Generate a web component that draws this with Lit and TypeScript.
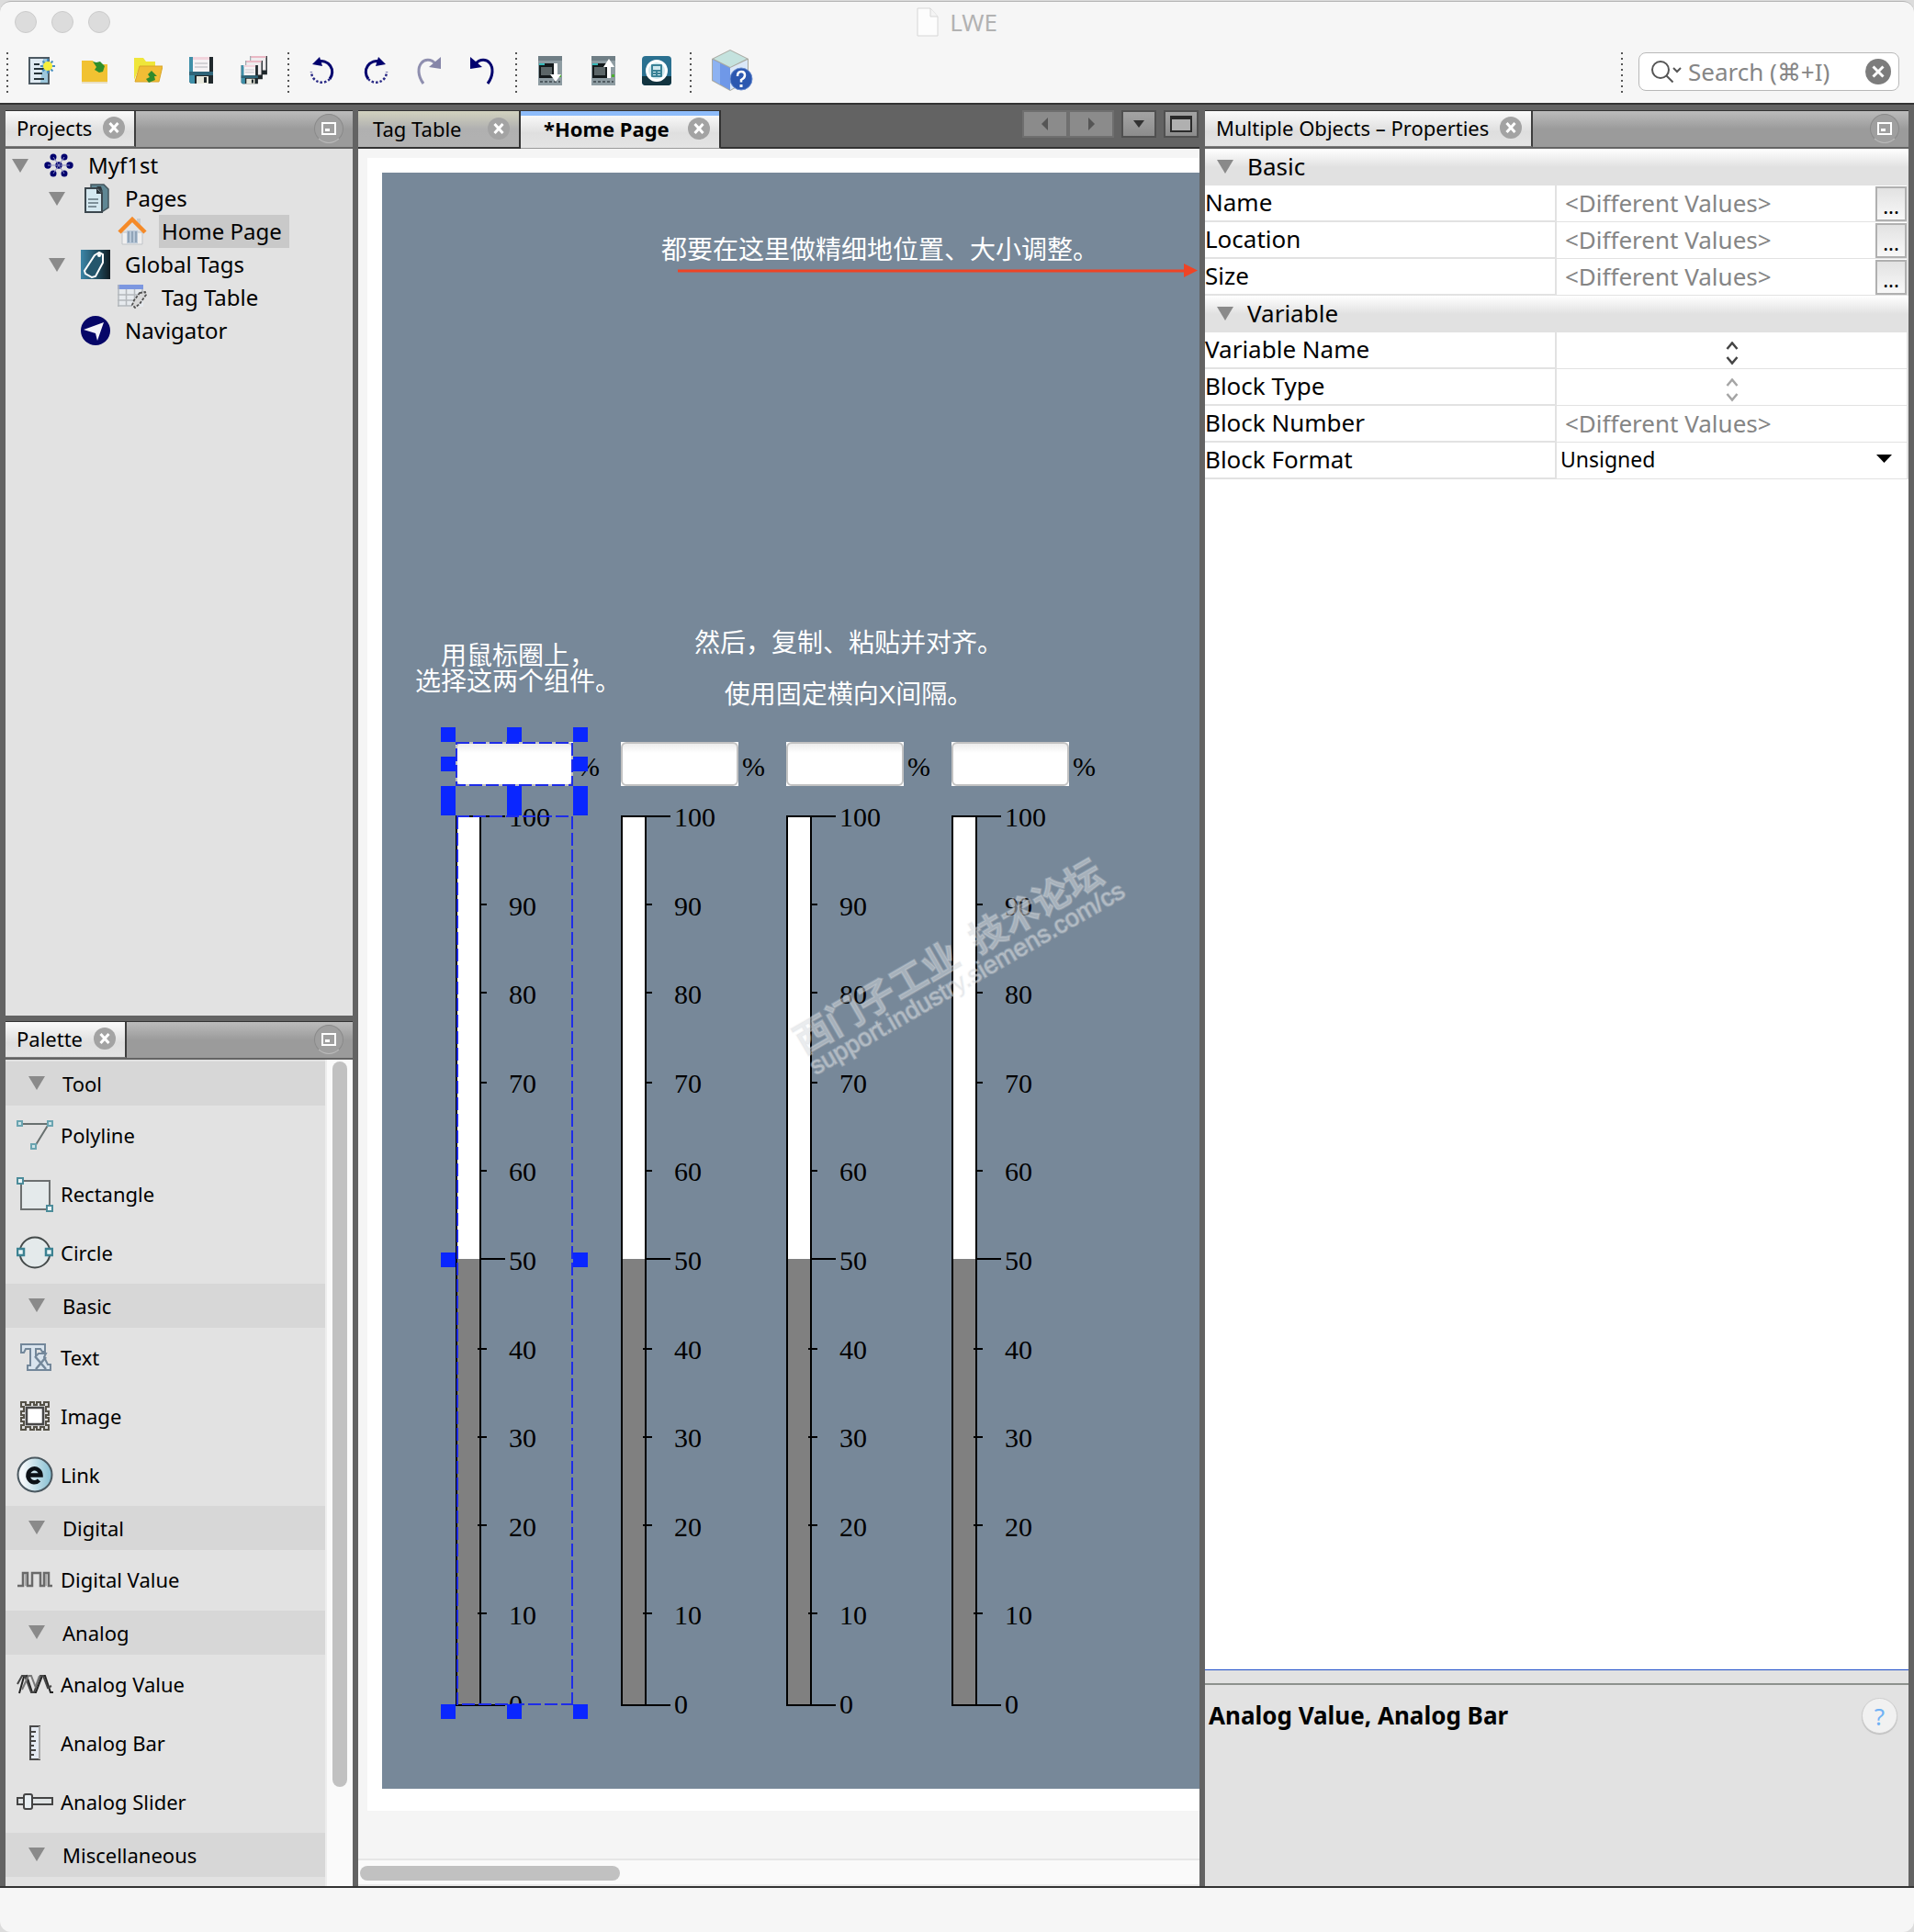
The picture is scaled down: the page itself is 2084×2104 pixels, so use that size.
import { LitElement, html, svg, css, nothing, TemplateResult } from "lit";
import { customElement, property } from "lit/decorators.js";
import { classMap } from "lit/directives/class-map.js";

const icon = (size: number, body: unknown, box = "0 0 32 32") =>
  html`<svg class="ico" width=${size} height=${size} viewBox=${box} aria-hidden="true">${body}</svg>`;

const closeIcon = icon(24, svg`<circle cx="12" cy="12" r="12" fill="#a3a3a3"/><path d="M7.500 7l9 10M16.500 7l-9 10" stroke="#fff" stroke-width="3"/>`, "0 0 24 24");

const floppy = svg`<path d="M1 0h26v29H3l-2-2z" fill="#20282c"/><path d="M1 0h6v29H3l-2-2z" fill="#3f8fa8"/><path d="M5 0h18v16H5z" fill="#f6f2f4"/><path d="M5 0h18v3H5z" fill="#f2d4dc"/><path d="M7 7h14M7 11h14" stroke="#c8c8cc" stroke-width="1.500"/><path d="M1 16h26v4H1z" fill="#2f6478"/><path d="M9 21h13v8H9z" fill="#e8e8dc"/><path d="M17 22h3v6h-3z" fill="#20282c"/>`;

const backFloppy = svg`<path d="M1 0h26v29H1z" fill="#20282c"/><path d="M1 0h24v22H1z" fill="#efecee"/><path d="M1 0h24v3H1z" fill="#eab8c4"/><path d="M1 0v22" stroke="#9aa6ac" stroke-width="1.500"/>`;

const plc = (up: boolean) => svg`<path d="M3 0h26v32H3z" fill="#8e9ca2"/><path d="M3 0h26v5H3z" fill="#6f7e85"/><path d="M4 8h17v16H4z" fill="#141a1c"/><path d="M4 8h6v2H4z" fill="#35b8b8"/><path d="M6 12h12v9H6z" fill="#5c6668"/><path d="M5 28h22" stroke="#4f5a60" stroke-width="2" stroke-dasharray="3 2"/><path d="M25 20h3v3h-3z" fill="#4caf30"/>${
  up ? svg`<path d="M20 24V12h-4l6-9 6 9h-4v12z" fill="#fff"/>` : svg`<path d="M20 8v12h-4l6 8 6-8h-4V8z" fill="#fff"/>`}`;

const ICONS: Record<string, TemplateResult> = {
  newFile: icon(32, svg`<path d="M3 2h21v28H3z" fill="#dfeaf2" stroke="#4d5a63" stroke-width="2"/><path d="M18 3h5v26h-8z" fill="#9cc7dc"/><path d="M8 9h6M8 14h11M8 19h9M8 25h11" stroke="#263238" stroke-width="2"/><path d="M23 3v16M15 11h16M17.500 5.500l11 11M28.500 5.500l-11 11" stroke="#4a90c0" stroke-width="2"/><circle cx="23" cy="11" r="5" fill="#f6ee3c"/>`),
  importFolder: icon(32, svg`<path d="M2 5h12l3 4h13v20H2z" fill="#f1c232"/><path d="M2 28h28v2H2z" fill="#e9dfc4"/><path d="M14 6l4 1 4-1 5 5-2 6-4 1-5-3 2-3z" fill="#2f8f2a"/>`),
  openFolder: icon(32, svg`<path d="M1 2h10l3 4h10v6H7L1 26z" fill="#efe63a"/><path d="M7 11h25l-4 17H2z" fill="#f1bd35" stroke="#d8a428"/><path d="M20 16l6 6h-3l1 4-7 3-3-4 4-2-2-3z" fill="#2f8a2c"/>`),
  save: icon(30, floppy, "0 0 28 30"),
  saveAll: icon(32, svg`<g transform="translate(11 0) scale(.7)">${backFloppy}</g><g transform="translate(6 5) scale(.7)">${backFloppy}</g><g transform="translate(1 10) scale(.7)">${floppy}</g>`),
  undoAll: icon(32, svg`<path d="M11 6a12 12 0 0 1 13 19" fill="none" stroke="#00006e" stroke-width="3"/><path d="M24 25A11.500 11.500 0 0 1 4 17" fill="none" stroke="#2b2b86" stroke-width="2.500" stroke-dasharray="2.500 2"/><path d="M5 9l8-8 3 10z" fill="#00006e"/>`),
  redoAll: icon(32, svg`<path d="M21 6A12 12 0 0 0 8 25" fill="none" stroke="#00006e" stroke-width="3"/><path d="M8 25a11.500 11.500 0 0 0 20-8" fill="none" stroke="#2b2b86" stroke-width="2.500" stroke-dasharray="2.500 2"/><path d="M27 9l-8-8-3 10z" fill="#00006e"/>`),
  redo: icon(32, svg`<path d="M10 30C-3 12 12-4 24 9" fill="none" stroke="#8f8faf" stroke-width="3"/><path d="M29 1v13l-13-2z" fill="#8585a8"/>`),
  undo: icon(32, svg`<path d="M22 30C35 12 20-4 8 9" fill="none" stroke="#00006e" stroke-width="3"/><path d="M3 1v13l13-2z" fill="#00006e"/>`),
  download: icon(32, plc(false)),
  upload: icon(32, plc(true)),
  simulate: icon(32, svg`<rect width="32" height="32" rx="4" fill="#2a7090"/><path d="M0 22h32v6a4 4 0 0 1-4 4H4a4 4 0 0 1-4-4z" fill="#123440"/><circle cx="16" cy="16" r="10.500" fill="#cfe8ee" stroke="#fff" stroke-width="3"/><rect x="10" y="9" width="12" height="14" rx="1" fill="#3a8296"/><path d="M12 11h8v4h-8zM12 17h3v1h-3zM17 17h3v1h-3zM12 20h3v1h-3zM17 20h3v1h-3z" fill="#cfe8ee"/>`),
  help: icon(48, svg`<path d="M23 1l20 10v24L23 46 3 35V11z" fill="#a9a9a0"/><path d="M23 2l18 9-18 9-18-9z" fill="#c4e2de"/><path d="M4 12l19 9v24L4 34z" fill="#6f98e8"/><path d="M4 12l8 4v23l-8-5z" fill="#8db2f2"/><path d="M42 12l-19 9v24l19-11z" fill="#dbe8f8"/><circle cx="35" cy="33" r="12" fill="#2c58b0" stroke="#6d8fd0"/><path d="M31 30q0-5 4-5t4 4q0 3-4 5v2.500" fill="none" stroke="#fff" stroke-width="2.500"/><path d="M33.500 39h3v3h-3z" fill="#fff"/>`, "0 0 48 48"),
  project: icon(32, svg`<g fill="#00006e"><circle cx="10" cy="7" r="3.500"/><circle cx="22" cy="7" r="3.500"/><circle cx="4" cy="16" r="3.700"/><circle cx="16" cy="16" r="3.700"/><circle cx="28" cy="16" r="3.700"/><circle cx="10" cy="25" r="3.500"/><circle cx="22" cy="25" r="3.500"/></g><path d="M4 16h24M10 7l12 18M22 7L10 25" stroke="#8a8ac0" stroke-width="1"/>`),
  pages: icon(32, svg`<path d="M11 1h14l5 5v20l-6 4H11z" fill="#5f8794" stroke="#42545c" stroke-width="1.500"/><path d="M5 5h14l4 5v21H5z" fill="#d4e8f0" stroke="#3c474e" stroke-width="2"/><path d="M17 5l6 6h-6zM17 3l7 6-2-6z" fill="#2d363b"/><path d="M8 17h11M8 21h11M8 25h9" stroke="#7d9099" stroke-width="1.800"/>`),
  home: icon(32, svg`<path d="M5 17h22v13H5z" fill="#f0f0f0" stroke="#c0c4c8"/><path d="M10 15h12v14H10z" fill="#b9c8d8"/><path d="M12 16v12M16 16v12M20 16v12" stroke="#8499ae" stroke-width="1.500"/><path d="M21 2h4v7l-4-4z" fill="#c8ccd0"/><path d="M2 17L16 3l14 14" fill="none" stroke="#f58a28" stroke-width="4.500"/>`),
  tags: icon(32, svg`<defs><linearGradient id="tg"><stop offset="0" stop-color="#3c86a8"/><stop offset=".6" stop-color="#1f4a5c"/><stop offset="1" stop-color="#101c22"/></linearGradient></defs><path d="M0 0h32v32H0z" fill="url(#tg)"/><path d="M15 6l5-3 4 2v9l-8 15-4 1-7-4-1-3z" fill="#24566c" stroke="#fff" stroke-width="2"/><circle cx="20" cy="6" r="2" fill="#fff"/>`),
  table: icon(32, svg`<path d="M0 2h28v24H0z" fill="#e6eaee"/><path d="M0 2h28v5H0z" fill="#7c97e0"/><path d="M1 2v24M9.500 7v18M18.500 7v12M27 7v6M0 13h27M0 19h20M0 25h16" stroke="#b4b8bc" stroke-width="1.500"/><path d="M24 11l6-1 1 3-7 10-5 4-3-3 2-5z" fill="#d8d8d8" stroke="#505050" stroke-width="1.800" stroke-dasharray="3 1.500"/>`),
  navigator: icon(32, svg`<circle cx="16" cy="16" r="16" fill="#060668"/><path d="M3 15l22-8-7 20-2-8z" fill="#f4f4fa"/>`),
  polyline: icon(40, svg`<path d="M4 8h31L19 34" fill="none" stroke="#68706f" stroke-width="2"/><g fill="#cfe4e8" stroke="#6aa4b0" stroke-width="2"><path d="M1 5h5v5H1zM34 5h5v5h-5zM16 30h5v5h-5z"/></g>`, "0 0 40 40"),
  rectangle: icon(40, svg`<path d="M5 6h31v31H5z" fill="#e4eaeb" stroke="#6c7070" stroke-width="2"/><g fill="#e8f4f6" stroke="#4c8c9a" stroke-width="2"><path d="M1 3h6v6H1zM33 33h6v6h-6z"/></g>`, "0 0 40 40"),
  circle: icon(40, svg`<circle cx="20" cy="20" r="16.500" fill="#e4eaeb" stroke="#444a4a" stroke-width="2"/><g fill="#e8f4f6" stroke="#3c8292" stroke-width="2.500"><path d="M1 16h7v7H1zM32 16h7v7h-7z"/></g>`, "0 0 40 40"),
  text: icon(40, svg`<path d="M5 6h26v8h-3l-2-3h-5v8l3-3h8l-2 4 4 8h3v6h-25v-5h3V11h-5l-2 4H5z" fill="#d9e4ee" stroke="#73879a" stroke-width="2"/><path d="M20 19l12 14M32 20L21 33" stroke="#73879a" stroke-width="2.500"/>`, "0 0 40 40"),
  image: icon(40, svg`<path d="M6 6h28v28H6z" fill="#ddd"/><path d="M5 10V5h5v3h5V5h4v3h3V5h4v3h4V5h5v5h-3v5h3v4h-3v3h3v4h-3v4h3v5h-5v-3h-4v3h-4v-3h-3v3h-4v-3h-5v3H5v-5h3v-4H5v-4h3v-3H5v-4h3v-5z" fill="#ddd" stroke="#555248" stroke-width="2"/><path d="M11 11h18v18H11z" fill="#fff" stroke="#484848" stroke-width="2.500"/>`, "0 0 40 40"),
  link: icon(40, svg`<defs><linearGradient id="lk"><stop offset=".15" stop-color="#f4f8fa"/><stop offset="1" stop-color="#85bfd2"/></linearGradient></defs><circle cx="20" cy="20" r="18.500" fill="url(#lk)" stroke="#4a5860" stroke-width="2"/><path d="M13.500 20.500h13a7 7.500 0 1 0-2 5.500" fill="none" stroke="#0c1116" stroke-width="4.500"/>`, "0 0 40 40"),
  digital: icon(40, svg`<path d="M1 27h6V13h5v14h5V13h9v14h4V13h5v14h4" fill="none" stroke="#6a6a6a" stroke-width="2.500"/><path d="M10 14v13M32 14v13" stroke="#9a9a9a" stroke-width="1.500"/>`, "0 0 40 40"),
  analog: icon(40, svg`<g fill="none" stroke-width="2"><path d="M3 30L8 12l3-1 6 18h4l7-18h3l6 18h3" stroke="#222"/><path d="M1 20l5-9h3l7 18h3l7-18h3l5 13 4-2" stroke="#444"/><path d="M6 26l7-15h3l5 13" stroke="#777"/><path d="M21 22l4-11" stroke="#777"/></g>`, "0 0 40 40"),
  bar: icon(40, svg`<path d="M15 2h10v36H15z" fill="#e4eaf2" stroke="#4a4a4a" stroke-width="2"/><path d="M24 2h2v36h-2z" fill="#a9a9a9"/><path d="M16 8h5M16 13h3M16 18h5M16 23h3M16 28h5M16 33h3" stroke="#444" stroke-width="2"/>`, "0 0 40 40"),
  slider: icon(40, svg`<path d="M1 16h38v7H1z" fill="#dfe3e4" stroke="#444" stroke-width="2"/><rect x="8" y="12" width="9" height="16" rx="2" fill="#e8eef2" stroke="#444" stroke-width="2"/>`, "0 0 40 40"),
};

const triangle = html`<svg class="tri" width="18" height="15" viewBox="0 0 18 15" aria-hidden="true"><path d="M0 0h18L9 15z" fill="#8a8a8a"/></svg>`;

const shared = css`
  :host, * { box-sizing: border-box; }
  button, input, select { font: inherit; color: inherit; margin: 0; padding: 0; border: 0; background: none; border-radius: 0; }
  svg { display: block; flex: none; }
  ul { list-style: none; margin: 0; padding: 0; }
`;

/** Title strip of a docked panel: one tab and a minimise button. */
@customElement("dock-header")
export class DockHeader extends LitElement {
  static styles = [shared, css`
    :host { display: flex; flex: none; height: 42px; border-top: 1px solid #333; border-bottom: 2px solid #646464;
      background: linear-gradient(#bcbcbc, #9b9b9b 50%, #9b9b9b); justify-content: space-between; align-items: flex-start; padding-right: 10px; }
    .tab { display: flex; align-items: center; gap: 12px; height: 39px; padding: 0 10px 2px 12px; font-size: 22px; line-height: 30px;
      background: linear-gradient(#fafafa, #dedede 60%, #e4e4e4); border-right: 2px solid #3d3d3d; border-bottom: 1px solid #7d7d7d; white-space: nowrap; }
    .min { display: grid; place-items: center; width: 32px; height: 32px; margin-top: 3px; border-radius: 50%; border: 1px solid #8a8a8a; border-bottom-color: #bbb; background: #9f9f9f; }
  `];
  @property() label = "";
  render() {
    return html`
      <div class="tab"><span>${this.label}</span><button aria-label="Close ${this.label}">${closeIcon}</button></div>
      <button class="min" aria-label="Minimize ${this.label}">${icon(18, svg`<path d="M2 3h14v12H2z" fill="none" stroke="#fff" stroke-width="2"/><path d="M5 9h5v3H5z" fill="#fff"/>`, "0 0 18 18")}</button>`;
  }
}

interface Node { label: string; icon: string; level: number; open?: boolean; selected?: boolean; }
const TREE: Node[] = [
  { label: "Myf1st", icon: "project", level: 0, open: true },
  { label: "Pages", icon: "pages", level: 1, open: true },
  { label: "Home Page", icon: "home", level: 2, selected: true },
  { label: "Global Tags", icon: "tags", level: 1, open: true },
  { label: "Tag Table", icon: "table", level: 2 },
  { label: "Navigator", icon: "navigator", level: 1 },
];

@customElement("project-tree")
export class ProjectTree extends LitElement {
  static styles = [shared, css`
    :host { display: block; flex: 1; background: #e2e2e2; font-size: 24px; line-height: 36px; }
    .row { display: flex; align-items: center; height: 36px; padding-left: 7px; }
    .l1 { padding-left: 47px; }
    .l2 { padding-left: 87px; }
    .twist { width: 35px; height: 36px; display: flex; align-items: center; }
    .name { margin-left: 13px; padding: 0 8px 0 3px; white-space: nowrap; }
    .sel { background: #c9c9c9; }
  `];
  render() {
    return html`<ul role="tree" aria-label="Projects">${TREE.map((n) => html`
      <li role="treeitem" class="row l${n.level}">
        ${n.open ? html`<button class="twist" aria-label="Collapse ${n.label}">${triangle}</button>` : html`<span class="twist"></span>`}
        ${ICONS[n.icon]}
        <button class=${classMap({ name: true, sel: !!n.selected })}>${n.label}</button>
      </li>`)}</ul>`;
  }
}

const PALETTE: { title: string; items: [string, string][] }[] = [
  { title: "Tool", items: [["polyline", "Polyline"], ["rectangle", "Rectangle"], ["circle", "Circle"]] },
  { title: "Basic", items: [["text", "Text"], ["image", "Image"], ["link", "Link"]] },
  { title: "Digital", items: [["digital", "Digital Value"]] },
  { title: "Analog", items: [["analog", "Analog Value"], ["bar", "Analog Bar"], ["slider", "Analog Slider"]] },
  { title: "Miscellaneous", items: [] },
];

@customElement("tool-palette")
export class ToolPalette extends LitElement {
  static styles = [shared, css`
    :host { display: flex; background: #e2e2e2; font-size: 22px; line-height: 30px; }
    .list { flex: 1; padding: 2px 0 8px; }
    .head { display: flex; align-items: center; gap: 19px; width: 100%; height: 48px; padding: 0 0 1px 25px; background: #d7d7d7; }
    .items { padding-bottom: 2px; }
    .item { display: flex; align-items: center; gap: 8px; width: 100%; height: 64px; padding: 0 0 1px 12px; text-align: left; }
    .track { width: 30px; background: #fafafa; border-left: 2px solid #ededed; padding: 2px 0 0 6px; }
    .thumb { width: 16px; height: 88%; border-radius: 8px; background: #c1c1c1; }
  `];
  render() {
    return html`
      <div class="list">${PALETTE.map((g) => html`
        <section>
          <button class="head">${triangle}<span>${g.title}</span></button>
          <div class="items">${g.items.map(([i, label]) => html`<button class="item">${ICONS[i]}<span>${label}</span></button>`)}</div>
        </section>`)}</div>
      <div class="track"><div class="thumb"></div></div>`;
  }
}

/* Tick positions of an analog bar, measured from its top edge. */
const TICKS: [number, number][] = [[100, 1], [90, 97], [80, 193], [70, 291], [60, 387], [50, 483], [40, 581], [30, 677], [20, 773], [10, 869], [0, 969]];

const gauge = (x: number) => svg`
  <g transform="translate(${x} 700)">
    <rect x="1" y="1" width="26" height="968" fill="#fff"/>
    <rect x="1" y="483" width="26" height="486" fill="#808080"/>
    <rect x="1" y="1" width="26" height="968" fill="none" stroke="#000" stroke-width="2"/>
    ${TICKS.map(([v, y], i) => svg`
      <line x1=${v < 50 ? 24 : 27} x2=${v % 50 === 0 ? 54 : 34} y1=${y} y2=${y} stroke="#000" stroke-width="2"/>
      <text class="num" x="58" y=${Math.round(12 + i * 96.6)}>${v}</text>`)}
    <text class="num" x="132" y="-43">%</text>
  </g>`;

const HANDLE_ROWS = [604, 636, 668, 684, 1176, 1668];
const handles = HANDLE_ROWS.map((y) => [64, 136, 208].filter((x) => !(x === 136 && (y === 636 || y === 1176)))
  .map((x) => svg`<rect x=${x} y=${y} width="16" height="16" fill="#0a26ff"/>`));

@customElement("page-canvas")
export class PageCanvas extends LitElement {
  static styles = [shared, css`
    :host { display: flex; flex-direction: column; flex: 1; min-width: 0; background: #f5f5f5; }
    .sheet { margin: 10px 0 0 10px; padding: 16px 0 24px 16px; background: #fff; }
    .page { position: relative; overflow: hidden; height: 1760px; background: #778899; }
    .layer { position: absolute; left: 0; top: 0; }
    .num { font: 30px "Liberation Serif", serif; fill: #000; }
    .field { position: absolute; top: 620px; width: 128px; height: 48px; background: #fff; }
    .value { display: block; width: 128px; height: 48px; border: 2px solid #c2c2c2; border-radius: 6px; background: linear-gradient(#ececec, #fff 10px); }
    .note { position: absolute; margin: 0; color: #fff; font: 28px/28px "Liberation Sans", "Noto Sans CJK SC", sans-serif; text-align: center; white-space: nowrap; }
    .n1 { left: 304px; top: 71px; }
    .n2 { left: 36px; top: 513px; }
    .n3 { left: 340px; top: 499px; }
    .mark { fill: #d6dade; fill-opacity: .5; stroke: #e8eaec; stroke-opacity: .25; stroke-width: 2; paint-order: stroke; }
    .cn { font: 700 40px "Noto Sans CJK SC", sans-serif; white-space: pre; }
    .url { font: 27px "Liberation Sans", sans-serif; }
    .fill { flex: 1; min-height: 40px; }
    .track { height: 30px; padding: 6px 2px; background: #fafafa; border-top: 2px solid #e6e6e6; border-bottom: 2px solid #ebebeb; }
    .thumb { width: 31%; height: 16px; border-radius: 8px; background: #c1c1c1; }
  `];
  render() {
    const cols = [80, 260, 440, 620];
    return html`
      <div class="sheet"><div class="page">
        ${cols.map((x, i) => html`<div class="field" style="left:${x}px"><input class="value" aria-label="Analog value ${i + 1}"></div>`)}
        <svg class="layer" width="1400" height="1760" pointer-events="none">
          ${cols.map(gauge)}
          <g fill="none" stroke="#1f2de8" stroke-width="2" stroke-dasharray="14 4">
            <rect x="81" y="621" width="126" height="46"/>
            <path d="M81 701h126v967M82 701v967h126"/>
          </g>
          ${handles}
          <path d="M322 107h556" stroke="#ee4426" stroke-width="3"/><path d="M873 99l15 7.500-15 7.500z" fill="#ee4426"/>
          <g class="mark">
            <text class="cn" transform="translate(459 961) rotate(-30)">西门子工业<tspan dx="20">技术论坛</tspan></text>
            <text class="url" transform="translate(472 983) rotate(-30)">support.industry.siemens.com/cs</text>
          </g>
        </svg>
        <p class="note n1">都要在这里做精细地位置、大小调整。</p>
        <p class="note n2">用鼠标圈上，<br>选择这两个组件。</p>
        <p class="note n3">然后，复制、粘贴并对齐。<br><br>使用固定横向X间隔。</p>
      </div></div>
      <div class="fill"></div>
      <div class="track"><div class="thumb"></div></div>`;
  }
}

type Kind = "more" | "spin" | "spinOff" | "text" | "select";
const PROPS: { title: string; rows: [string, Kind][] }[] = [
  { title: "Basic", rows: [["Name", "more"], ["Location", "more"], ["Size", "more"]] },
  { title: "Variable", rows: [["Variable Name", "spin"], ["Block Type", "spinOff"], ["Block Number", "text"], ["Block Format", "select"]] },
];

@customElement("property-sheet")
export class PropertySheet extends LitElement {
  static styles = [shared, css`
    :host { display: flex; flex-direction: column; flex: 1; background: #fff; font-size: 26px; line-height: 32px; }
    table { width: 100%; border-collapse: separate; border-spacing: 0; table-layout: fixed; }
    td, th { padding: 0; height: 40px; font-weight: 400; text-align: left; }
    .head { background: linear-gradient(#fff, #e1e1e1 50%, #e1e1e1); }
    .toggle { display: flex; align-items: center; gap: 15px; padding: 0 0 2px 13px; width: 100%; }
    .name { border-bottom: 2px solid #e2e2e2; border-right: 2px solid #e2e2e2; padding-bottom: 2px; }
    .val { border-bottom: 1px solid #e2e2e2; border-right: 2px solid #e2e2e2; }
    .cell { display: flex; align-items: center; height: 38px; }
    .cell input { flex: 1; min-width: 0; height: 38px; padding: 0 0 2px 9px; color: #858585; }
    .more { width: 34px; height: 38px; border: 2px solid #b0b0b0; background: linear-gradient(#e2e2e2, #f8f8f8); line-height: 38px; font-size: 22px; }
    .spin { display: grid; place-items: center; width: 100%; height: 38px; padding-top: 6px; }
    .pick { position: relative; display: flex; flex: 1; align-items: center; }
    .pick svg { position: absolute; right: 16px; top: 12px; pointer-events: none; }
    select { appearance: none; width: 100%; height: 38px; padding: 0 0 4px 4px; font-size: 23px; }
    .rest { flex: 1; }
    .grip { height: 17px; border-top: 1px solid #1f4fc8; border-bottom: 2px solid #8d918d; background: #e2e2e2; }
    .about { display: flex; justify-content: space-between; align-items: flex-start; height: 219px; padding: 14px 12px 0 4px; background: #e2e2e2; line-height: 38px; font-weight: 700; }
    .help { display: grid; place-items: center; width: 39px; height: 39px; border-radius: 50%; background: #f1f1f1; border: 1px solid #cfcfcf; box-shadow: 0 1px 1px #bbb; color: #6fb1f5; font-weight: 400; line-height: 36px; font-size: 26px; }
  `];
  private control(kind: Kind, id: string) {
    const chev = (c: string) => icon(26, svg`<path d="M7.500 8l5.500-6.500L18.500 8M7.500 17l5.500 6.500L18.500 17" fill="none" stroke=${c} stroke-width="2.500"/>`, "0 0 26 26");
    if (kind === "spin") return html`<button id=${id} class="spin" aria-haspopup="listbox">${chev("#444")}</button>`;
    if (kind === "spinOff") return html`<button id=${id} class="spin" disabled>${chev("#a5a5a5")}</button>`;
    if (kind === "select") return html`<span class="pick"><select id=${id}><option>Unsigned</option></select><svg width="17" height="9" viewBox="0 0 17 9" aria-hidden="true"><path d="M0 0h17L8.500 9z"/></svg></span>`;
    return html`<input id=${id} value="<Different Values>">${kind === "more" ? html`<button class="more" aria-label="Edit">...</button>` : nothing}`;
  }
  render() {
    return html`
      <table>${PROPS.map((g) => html`<tbody>
        <tr><th class="head" colspan="2"><button class="toggle">${triangle}<span>${g.title}</span></button></th></tr>
        ${g.rows.map(([name, kind]) => {
          const id = name.replace(" ", "-").toLowerCase();
          return html`<tr><th class="name" scope="row"><label for=${id}>${name}</label></th><td class="val"><div class="cell">${this.control(kind, id)}</div></td></tr>`;
        })}
      </tbody>`)}</table>
      <div class="rest"></div>
      <div class="grip"></div>
      <div class="about"><span>Analog Value, Analog Bar</span><button class="help" aria-label="Help">?</button></div>`;
  }
}

@customElement("app-root")
export class AppRoot extends LitElement {
  static styles = [shared, css`
    :host { display: flex; flex-direction: column; min-height: 100vh; padding-top: 1px; background: #dcdcdc; font-family: "Noto Sans", "Open Sans", sans-serif; color: #000; }
    .window { display: flex; flex-direction: column; flex: 1; border-top: 1px solid #b4b4b4; border-radius: 12px; overflow: hidden; background: #f6f6f6; }
    .title { display: grid; grid-template-columns: 1fr auto 1fr; align-items: center; height: 42px; padding: 2px 16px 0; }
    .lights { display: flex; gap: 16px; }
    .light { width: 24px; height: 24px; border-radius: 50%; background: #dcdcdc; border: 1px solid #cbcbcb; }
    .doc { display: flex; align-items: center; gap: 12px; margin: 0; font-size: 26px; line-height: 32px; font-weight: 400; color: #b2b2b2; }
    .toolbar { display: flex; align-items: center; height: 68px; padding-right: 16px; }
    .tool { display: grid; place-items: center; width: 58px; height: 52px; margin-bottom: 2px; }
    .wide { width: 72px; }
    .sep { width: 16px; height: 46px; margin-top: 4px; background: repeating-linear-gradient(#555 0 2px, transparent 2px 6px) center / 2px 100% no-repeat; }
    .grow { flex: 1; }
    .search { display: flex; align-items: center; width: 284px; height: 42px; margin-left: 10px; padding: 0 8px 0 12px; gap: 5px; border: 1px solid #b8b8b8; border-radius: 8px; background: #fff; }
    .search input { flex: 1; min-width: 0; font-size: 26px; line-height: 32px; }
    .search input::placeholder { color: #868686; opacity: 1; }
    .work { display: grid; grid-template-columns: 378px minmax(0, 916fr) minmax(0, 766fr); gap: 6px; flex: 1; padding: 6px 6px 0; background: #636363; border-top: 2px solid #333; border-bottom: 2px solid #333; }
    .col, .panel { display: flex; flex-direction: column; }
    .col { gap: 6px; min-width: 0; }
    .first { flex: 1; }
    .editor { display: flex; flex: none; justify-content: space-between; height: 42px; border-bottom: 2px solid #333; background: #636363; }
    .tabs { display: flex; }
    .tab { display: flex; align-items: center; justify-content: space-between; height: 40px; padding: 0 10px 2px 16px; font-size: 22px; line-height: 30px; border-top: 1px solid #333; border-right: 2px solid #333; white-space: nowrap; }
    .off { width: 177px; background: linear-gradient(#d2d2bf, #b0b0b0 50%, #b2b2b2); }
    .on { width: 218px; height: 42px; padding: 0 10px 3px 25px; font-weight: 700; border-bottom: 1px solid #999; background: linear-gradient(#8ebcfa 0 5px, #f8f8f8 5px, #dfdfdf 60%, #e4e4e4); }
    .nav { display: flex; padding-right: 1px; gap: 8px; }
    .pair { display: flex; }
    .nb { display: grid; place-items: center; width: 38px; height: 30px; border: 2px solid #505050; background: linear-gradient(#a4a4a4, #8c8c8c); }
    .pair .nb { width: 50px; border-color: #6f6f6f; background: #8b8b8b; }
    .status { height: 48px; flex: none; }
  `];

  private tools(list: [string, string][]) {
    return list.map(([i, label]) => html`<button class=${classMap({ tool: true, wide: i === "help" })} aria-label=${label}>${ICONS[i]}</button>`);
  }

  render() {
    const sep = html`<span class="sep"></span>`;
    return html`<div class="window">
      <header class="title">
        <div class="lights"><button class="light" aria-label="Close window"></button><button class="light" aria-label="Minimize window"></button><button class="light" aria-label="Zoom window"></button></div>
        <h1 class="doc"><svg width="24" height="32" viewBox="0 0 24 32" aria-hidden="true"><path d="M1 1h14l8 9v21H1z" fill="#fdfdfd" stroke="#d6d6d6"/><path d="M15 1v9h8" fill="#f4f4f4" stroke="#d6d6d6"/></svg><span>LWE</span></h1>
      </header>
      <div class="toolbar">
        ${sep}${this.tools([["newFile", "New"], ["importFolder", "Import"], ["openFolder", "Open"], ["save", "Save"], ["saveAll", "Save all"]])}
        ${sep}${this.tools([["undoAll", "Undo all"], ["redoAll", "Redo all"], ["redo", "Redo"], ["undo", "Undo"]])}
        ${sep}${this.tools([["download", "Download"], ["upload", "Upload"], ["simulate", "Simulate"]])}
        ${sep}${this.tools([["help", "Help"]])}
        <span class="grow"></span>${sep}
        <div class="search">
          <svg width="36" height="28" viewBox="0 0 36 28" aria-hidden="true"><g fill="none" stroke="#555" stroke-width="2"><circle cx="11" cy="12" r="9"/><path d="M17.500 18.500l7 7M25 10l4 4 4-4"/></g></svg>
          <input aria-label="Search" placeholder="Search (⌘+I)">
          <button aria-label="Clear search">${icon(28, svg`<circle cx="14" cy="14" r="14" fill="#7c7c7c"/><path d="M8.500 8.500l11 11M19.500 8.500l-11 11" stroke="#fff" stroke-width="3"/>`, "0 0 28 28")}</button>
        </div>
      </div>
      <main class="work">
        <div class="col">
          <section class="panel first"><dock-header label="Projects"></dock-header><project-tree></project-tree></section>
          <section class="panel"><dock-header label="Palette"></dock-header><tool-palette></tool-palette></section>
        </div>
        <section class="panel">
          <div class="editor">
            <div class="tabs">
              <div class="tab off"><span>Tag Table</span><button aria-label="Close Tag Table">${closeIcon}</button></div>
              <div class="tab on"><span>*Home Page</span><button aria-label="Close Home Page">${closeIcon}</button></div>
            </div>
            <div class="nav">
              <div class="pair">
                <button class="nb" aria-label="Previous tab">${icon(14, svg`<path d="M10 0v14L3 7z" fill="#555"/>`, "0 0 14 14")}</button>
                <button class="nb" aria-label="Next tab">${icon(14, svg`<path d="M4 0v14l7-7z" fill="#555"/>`, "0 0 14 14")}</button>
              </div>
              <button class="nb" aria-label="Tab list">${icon(12, svg`<path d="M0 2h12L6 10z" fill="#333"/>`, "0 0 12 12")}</button>
              <button class="nb" aria-label="Maximize">${icon(24, svg`<path d="M1 4h22v16H1z" fill="#b0b0b0" stroke="#2b2b2b" stroke-width="2"/><path d="M0 3h24v4H0z" fill="#2b2b2b"/>`, "0 0 24 24")}</button>
            </div>
          </div>
          <page-canvas></page-canvas>
        </section>
        <section class="panel"><dock-header label="Multiple Objects – Properties"></dock-header><property-sheet></property-sheet></section>
      </main>
      <footer class="status"></footer>
    </div>`;
  }
}
